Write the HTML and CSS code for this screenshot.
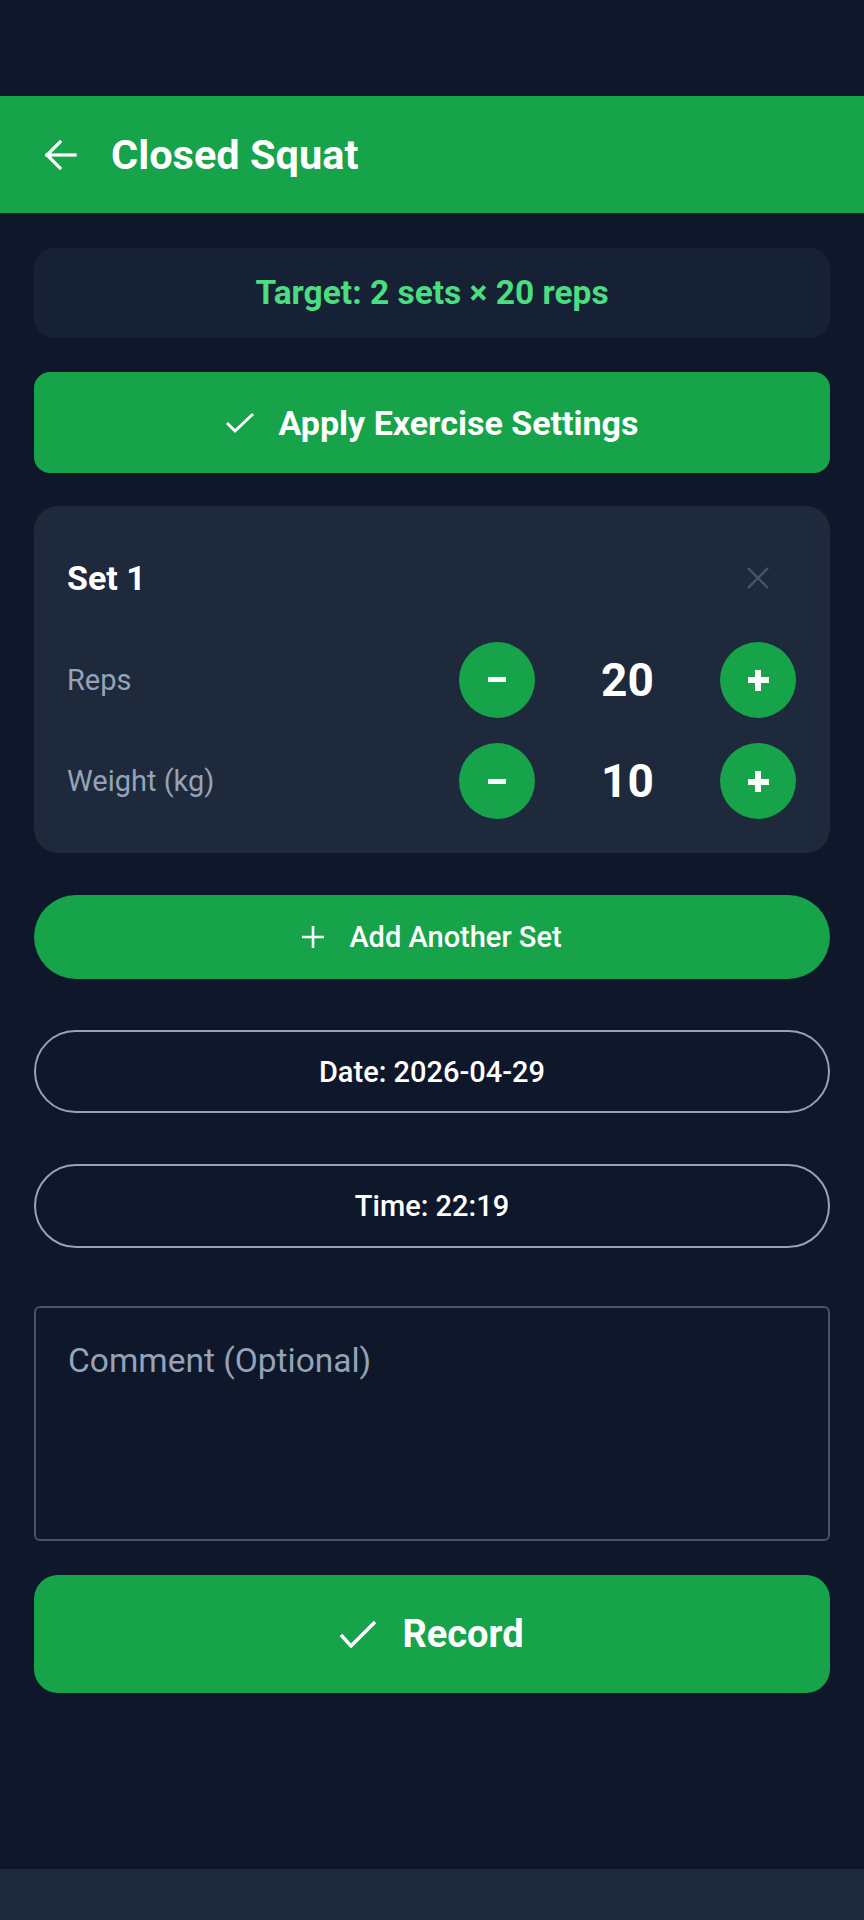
FILE: index.html
```html
<!DOCTYPE html>
<html lang="en">
<head>
<meta charset="utf-8">
<title>Closed Squat</title>
<link rel="stylesheet" href="styles.css">
</head>
<body>
<div class="screen">
  <div class="status"></div>
  <header class="appbar">
    <svg class="back" width="34" height="32" viewBox="0 0 34 32" fill="none" stroke="#fff" stroke-width="3.2" stroke-linecap="square">
      <path d="M32 16H4"/>
      <path d="M17 3L4 16l13 13"/>
    </svg>
    <h1 class="title">Closed Squat</h1>
  </header>
  <main class="content">
    <div class="target">Target: 2 sets × 20 reps</div>
    <button class="btn apply">
      <svg width="28" height="22" viewBox="0 0 28 22" fill="none" stroke="#fff" stroke-width="3"><path d="M1 11l8 8L27 2"/></svg>
      <span>Apply Exercise Settings</span>
    </button>
    <section class="setcard">
      <div class="row">
        <span class="settitle">Set 1</span>
        <span class="closebox">
          <svg width="24" height="24" viewBox="0 0 24 24" fill="none" stroke="#475569" stroke-width="2.4"><path d="M2 2l20 20M22 2L2 22"/></svg>
        </span>
      </div>
      <div class="row">
        <span class="label">Reps</span>
        <div class="stepper">
          <span class="circle"><span class="minus"></span></span>
          <span class="value">20</span>
          <span class="circle"><span class="plus"></span></span>
        </div>
      </div>
      <div class="row">
        <span class="label">Weight (kg)</span>
        <div class="stepper">
          <span class="circle"><span class="minus"></span></span>
          <span class="value">10</span>
          <span class="circle"><span class="plus"></span></span>
        </div>
      </div>
    </section>
    <button class="btn addset">
      <svg width="22" height="22" viewBox="0 0 22 22" fill="none" stroke="#fff" stroke-width="2.6"><path d="M11 0v22M0 11h22"/></svg>
      <span>Add Another Set</span>
    </button>
    <button class="pill date">Date: 2026-04-29</button>
    <button class="pill time">Time: 22:19</button>
    <div class="comment">Comment (Optional)</div>
    <button class="btn record">
      <svg width="36" height="28" viewBox="0 0 36 28" fill="none" stroke="#fff" stroke-width="3.4"><path d="M1 15l10 11L35 2"/></svg>
      <span>Record</span>
    </button>
  </main>
  <div class="spacer"></div>
  <footer class="bottombar"></footer>
</div>
</body>
</html>
```

FILE: styles.css
```css
* { box-sizing: border-box; }
html, body { margin: 0; padding: 0; }
body {
  background: #0f172a;
  font-family: Roboto, "Liberation Sans", sans-serif;
  color: #fff;
}
.screen {
  height: 1920px;
  display: flex;
  flex-direction: column;
}
.status { height: 96px; flex: none; }
.appbar {
  height: 117px;
  flex: none;
  background: #16a34a;
  display: flex;
  align-items: center;
  padding-left: 43px;
  gap: 34px;
}
.back { display: block; flex: none; margin-top: 1px; }
.title {
  margin: 0;
  font-size: 41.5px;
  font-weight: 700;
  line-height: 1;
}
.content {
  padding: 35px 34px 0;
  display: flex;
  flex-direction: column;
}
.target {
  height: 90px;
  border-radius: 20px;
  background: #172135;
  color: #4ade80;
  font-size: 33.5px;
  font-weight: 700;
  display: flex;
  align-items: center;
  justify-content: center;
  padding-bottom: 2px;
}
.btn {
  border: 0;
  background: #16a34a;
  color: #fff;
  font-family: inherit;
  display: flex;
  align-items: center;
  justify-content: center;
  padding: 0;
  width: 100%;
}
.apply {
  margin-top: 34px;
  height: 101px;
  border-radius: 16px;
  font-size: 34px;
  font-weight: 700;
  gap: 25px;
}
.setcard {
  margin-top: 33px;
  background: #1e293b;
  border-radius: 24px;
  padding: 34px 34px 34px 33px;
  display: flex;
  flex-direction: column;
  gap: 25.5px;
}
.row {
  height: 76px;
  display: flex;
  align-items: center;
  justify-content: space-between;
}
.settitle {
  font-size: 34px;
  font-weight: 700;
}
.closebox {
  width: 76px;
  display: flex;
  justify-content: center;
}
.closebox svg { display: block; }
.label {
  font-size: 29px;
  color: #94a3b8;
}
.stepper {
  display: flex;
  align-items: center;
}
.circle {
  width: 76px;
  height: 76px;
  border-radius: 50%;
  background: #16a34a;
  display: flex;
  align-items: center;
  justify-content: center;
}
.minus {
  width: 18px;
  height: 5px;
  background: #fff;
}
.plus {
  width: 21px;
  height: 21px;
  margin-top: 1px;
  background:
    linear-gradient(#fff, #fff) center / 21px 6px no-repeat,
    linear-gradient(#fff, #fff) center / 6px 21px no-repeat;
}
.value {
  width: 185px;
  text-align: center;
  font-size: 46px;
  font-weight: 700;
}
.addset {
  margin-top: 42px;
  height: 84px;
  border-radius: 42px;
  font-size: 29px;
  font-weight: 500;
  gap: 25px;
}
.pill {
  height: 83px;
  border-radius: 42px;
  border: 2px solid #94a3b8;
  background: transparent;
  color: #fff;
  font-family: inherit;
  font-size: 29px;
  font-weight: 500;
  width: 100%;
  padding: 0;
}
.date { margin-top: 51px; }
.time { margin-top: 51px; height: 84px; }
.comment {
  margin-top: 58px;
  height: 235px;
  border: 2px solid #475569;
  border-radius: 6px;
  padding: 36px 0 0 32px;
  font-size: 33.5px;
  color: #94a3b8;
  line-height: 1;
}
.record {
  margin-top: 34px;
  height: 118px;
  border-radius: 24px;
  font-size: 38px;
  font-weight: 700;
  gap: 26px;
}
.spacer { flex: 1; }
.bottombar {
  height: 51px;
  flex: none;
  background: #1e293b;
}
```
